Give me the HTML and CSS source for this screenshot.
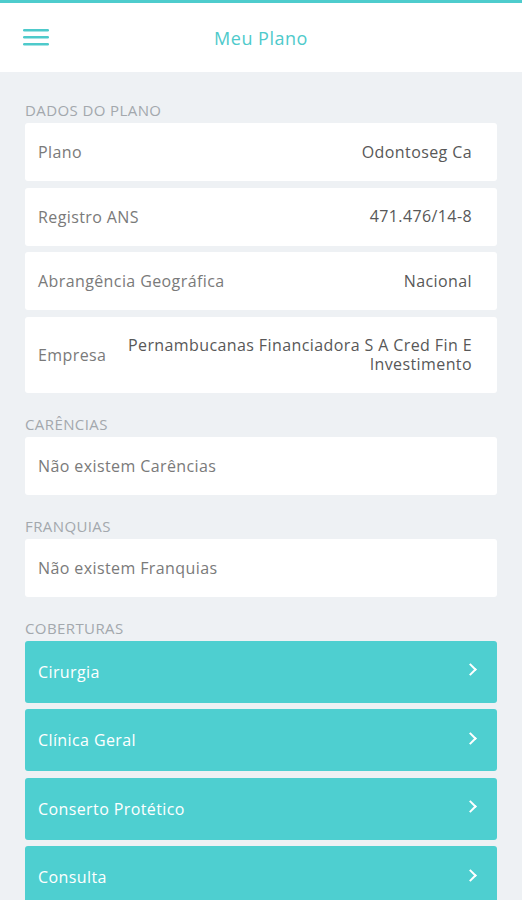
FILE: index.html
```html
<!DOCTYPE html>
<html lang="pt-BR">
<head>
  <meta charset="UTF-8">
  <meta name="viewport" content="width=device-width, initial-scale=1">
  <title>Meu Plano</title>
  <link rel="stylesheet" href="styles.css">
</head>
<body>
  <!-- Top bar -->
  <header class="topbar">
    <button class="menu-button" aria-label="Menu">
      <svg width="26" height="18" viewBox="0 0 26 18">
        <rect x="0" y="1" width="26" height="2.5" rx="1.2"/>
        <rect x="0" y="8" width="26" height="2.5" rx="1.2"/>
        <rect x="0" y="15" width="26" height="2.5" rx="1.2"/>
      </svg>
    </button>
    <h1>Meu Plano</h1>
  </header>

  <main class="content">
    <section class="section">
      <h2 class="section-title">Dados do Plano</h2>
      <div class="card info-row">
        <span class="info-label">Plano</span>
        <span class="info-value">Odontoseg Ca</span>
      </div>
      <div class="card info-row">
        <span class="info-label">Registro ANS</span>
        <span class="info-value">471.476/14-8</span>
      </div>
      <div class="card info-row">
        <span class="info-label">Abrangência Geográfica</span>
        <span class="info-value">Nacional</span>
      </div>
      <div class="card info-row">
        <span class="info-label">Empresa</span>
        <span class="info-value">Pernambucanas Financiadora S A Cred Fin E Investimento</span>
      </div>
    </section>

    <section class="section">
      <h2 class="section-title">Carências</h2>
      <div class="card info-row">
        <span class="info-label">Não existem Carências</span>
      </div>
    </section>

    <section class="section">
      <h2 class="section-title">Franquias</h2>
      <div class="card info-row">
        <span class="info-label">Não existem Franquias</span>
      </div>
    </section>

    <section class="section">
      <h2 class="section-title">Coberturas</h2>
      <a class="card cover-row" href="#">Cirurgia <span class="chevron"></span></a>
      <a class="card cover-row" href="#">Clínica Geral <span class="chevron"></span></a>
      <a class="card cover-row" href="#">Conserto Protético <span class="chevron"></span></a>
      <a class="card cover-row" href="#">Consulta <span class="chevron"></span></a>
    </section>
  </main>
</body>
</html>
```

FILE: styles.css
```css
body {
  font-family: "Open Sans", Arial, sans-serif;
  background-color: #eef1f4;
  color: #666;
  margin: 0;
  padding: 0;
}
.topbar {
  height: 69px;
  background-color: #fff;
  border-top: 3px solid #4ecccd;
  display: flex;
  align-items: center;
  justify-content: center;
  position: relative;
}
.topbar h1 {
  margin: 0;
  font-size: 18px;
  font-weight: 400;
  letter-spacing: 0.5px;
  color: #4ecacb;
}
.menu-button {
  position: absolute;
  left: 23px;
  top: 25px;
  padding: 0;
  border: none;
  background: none;
  fill: #4ecacb;
  cursor: pointer;
}
.content {
  padding: 7px 25px 0;
}
.section-title {
  margin: 22px 0 4px;
  font-size: 15px;
  line-height: 18px;
  font-weight: 400;
  letter-spacing: 0.4px;
  color: #a3a8ad;
  text-transform: uppercase;
}
.card {
  display: flex;
  align-items: center;
  border-radius: 3px;
  margin-bottom: 6.5px;
  font-size: 16px;
  letter-spacing: 0.4px;
}
.info-row {
  background-color: #fff;
  padding: 19px 25px 19px 13px;
  line-height: 20px;
  gap: 18px;
}
.info-label {
  flex-shrink: 0;
  color: #7a7a7a;
}
.info-value {
  flex: 1;
  text-align: right;
  color: #585858;
  line-height: 19px;
}
.cover-row {
  background-color: #4ecfd0;
  color: #fff;
  text-decoration: none;
  height: 62px;
  padding: 0 22px 0 13px;
  justify-content: space-between;
  box-sizing: border-box;
}
.chevron {
  width: 7px;
  height: 7px;
  border-right: 2px solid #fff;
  border-top: 2px solid #fff;
  transform: rotate(45deg);
  margin-top: -4px;
}
```
